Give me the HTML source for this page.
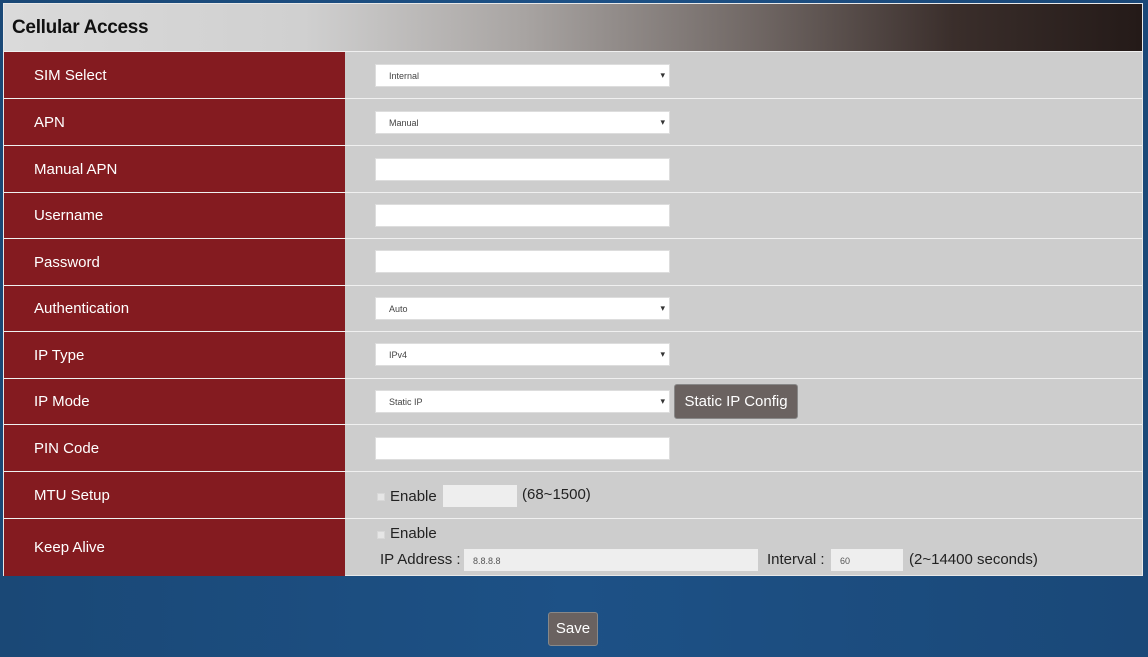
<!DOCTYPE html>
<html><head><style>
*{margin:0;padding:0;box-sizing:border-box}
body{width:1148px;height:657px;background:linear-gradient(90deg,#1a4876,#1d5186 50%,#1a4878);font-family:"Liberation Sans",sans-serif;position:relative;overflow:hidden}
#p{position:absolute;left:3px;top:3px;width:1140px;height:573px;background:#cdcdcd;border:1px solid #e8e8e8}
#h{position:absolute;left:0;top:0;width:1138px;height:47px;background:linear-gradient(90deg,#dadada 0,#d0d0d0 300px,#a8a4a2 520px,#6e6562 760px,#3a2e2b 950px,#241a18 1138px);font-weight:bold;font-size:19px;color:#111;padding:13px 0 0 8px;letter-spacing:-0.3px}
.r{position:absolute;left:0;width:1138px;border-top:1px solid #f0f0f0}
.l{position:absolute;left:0;top:0;bottom:0;width:341px;background:#841b20;color:#fff;font-size:15px;padding-left:30px;display:flex;align-items:center}
.s,.t{position:absolute;left:371px;width:295px;height:23px;background:#fff;border:1px solid #ddd;font-size:9px;color:#444;padding:6px 0 0 13px}
.s:after{content:"▾";position:absolute;right:4px;top:5px;font-size:9px;color:#333}
.btn{position:absolute;background:#6a6260;color:#fff;border:1px solid #888;border-radius:3px;font-size:15px;text-align:center}
.tx{position:absolute;font-size:15px;color:#222}
.in{position:absolute;background:#eee;height:22px;font-size:9px;color:#555;padding:7px 0 0 9px}
.cb{position:absolute;width:8px;height:8px;background:#e6e6e6;border:1px solid #d8d8d8}
</style></head><body>
<div id="p">
<div id="h">Cellular Access</div>
<div class="r" style="top:47px;height:47px"><div class="l">SIM Select</div><div class="s" style="top:12px">Internal</div></div>
<div class="r" style="top:94px;height:47px"><div class="l">APN</div><div class="s" style="top:12px">Manual</div></div>
<div class="r" style="top:141px;height:47px"><div class="l">Manual APN</div><div class="t" style="top:12px"></div></div>
<div class="r" style="top:188px;height:46px"><div class="l">Username</div><div class="t" style="top:11px"></div></div>
<div class="r" style="top:234px;height:47px"><div class="l">Password</div><div class="t" style="top:11px"></div></div>
<div class="r" style="top:281px;height:46px"><div class="l">Authentication</div><div class="s" style="top:11px">Auto</div></div>
<div class="r" style="top:327px;height:47px"><div class="l">IP Type</div><div class="s" style="top:11px">IPv4</div></div>
<div class="r" style="top:374px;height:46px"><div class="l">IP Mode</div><div class="s" style="top:11px">Static IP</div><div class="btn" style="left:670px;top:5px;width:124px;height:35px;line-height:33px">Static IP Config</div></div>
<div class="r" style="top:420px;height:47px"><div class="l">PIN Code</div><div class="t" style="top:12px"></div></div>
<div class="r" style="top:467px;height:47px"><div class="l">MTU Setup</div><div class="cb" style="left:373px;top:21px"></div><div class="tx" style="left:386px;top:16px">Enable</div><div class="in" style="left:439px;top:13px;width:74px"></div><div class="tx" style="left:518px;top:14px">(68~1500)</div></div>
<div class="r" style="top:514px;height:58px"><div class="l">Keep Alive</div><div class="cb" style="left:373px;top:12px"></div><div class="tx" style="left:386px;top:6px">Enable</div><div class="tx" style="left:376px;top:32px">IP Address :</div><div class="in" style="left:460px;top:30px;width:294px">8.8.8.8</div><div class="tx" style="left:763px;top:32px">Interval :</div><div class="in" style="left:827px;top:30px;width:72px">60</div><div class="tx" style="left:905px;top:32px">(2~14400 seconds)</div></div>
</div>
<div class="btn" style="left:548px;top:612px;width:50px;height:34px;line-height:32px">Save</div>
</body></html>
